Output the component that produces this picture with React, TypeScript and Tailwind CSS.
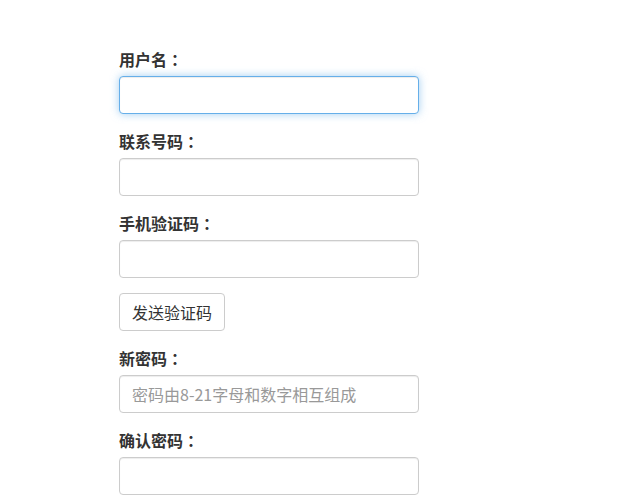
const font = { fontFamily: '"Noto Sans CJK SC", "Liberation Sans", sans-serif' };

function Label({ text }: { text: string }) {
  return (
    <label className="mb-[8px] block h-[18px] text-[16px] font-bold leading-[18px] text-[#333]">
      {text}
      <span style={{ fontFamily: '"Noto Sans CJK JP", sans-serif' }}>：</span>
    </label>
  );
}

function Field({ label, placeholder, focused, type = "text" }: { label: string; placeholder?: string; focused?: boolean; type?: string }) {
  return (
    <div className="mb-[18px]">
      <Label text={label} />
      <input
        type={type}
        placeholder={placeholder}
        className={
          "block h-[38px] w-[300px] rounded-[4px] border bg-white px-[12px] text-[16px] text-[#555] outline-none placeholder:text-[#999] " +
          (focused
            ? "border-[#66afe9] shadow-[inset_0_1px_1px_rgba(0,0,0,0.075),0_0_8px_rgba(102,175,233,0.6)]"
            : "border-[#ccc] shadow-[inset_0_1px_1px_rgba(0,0,0,0.075)]")
        }
      />
    </div>
  );
}

export default function App() {
  return (
    <div className="min-h-[499px] bg-white pl-[119px] pt-[50px]" style={font}>
      <form className="w-[300px]">
        <Field label="用户名" focused />
        <Field label="联系号码" />
        <div className="mb-[15px]">
          <Label text="手机验证码" />
          <input className="block h-[38px] w-[300px] rounded-[4px] border border-[#ccc] bg-white px-[12px] text-[16px] outline-none shadow-[inset_0_1px_1px_rgba(0,0,0,0.075)]" />
        </div>
        <button
          type="button"
          className="mb-[18px] block h-[38px] rounded-[4px] border border-[#ccc] bg-white px-[12px] text-[16px] text-[#333]"
        >
          发送验证码
        </button>
        <Field label="新密码" placeholder="密码由8-21字母和数字相互组成" type="password" />
        <Field label="确认密码" type="password" />
      </form>
    </div>
  );
}
